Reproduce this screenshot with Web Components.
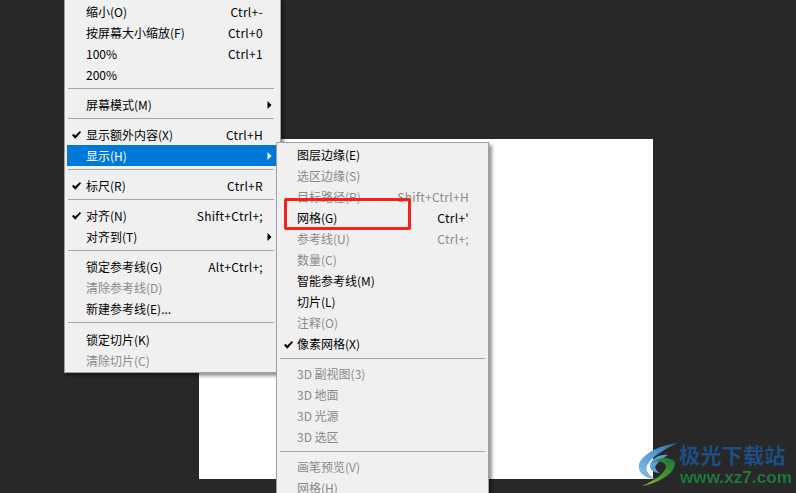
<!DOCTYPE html>
<html>
<head>
<meta charset="utf-8">
<title>menu</title>
<style>
html, body { margin: 0; height: 100%; }
body { background: #282828; overflow: hidden; font-family: "Noto Sans CJK SC", "Noto Sans", sans-serif; }
</style>
</head>
<body>
<ps-stage>
  <ps-menu style="left:64px;top:-2px;width:217px;--left:19px;--right:15px;--sep-right:4px">
    <ps-item label="缩小(O)" key="Ctrl+-"></ps-item>
    <ps-item label="按屏幕大小缩放(F)" key="Ctrl+0"></ps-item>
    <ps-item label="100%" key="Ctrl+1"></ps-item>
    <ps-item label="200%"></ps-item>
    <ps-sep></ps-sep>
    <ps-item label="屏幕模式(M)" arrow></ps-item>
    <ps-sep></ps-sep>
    <ps-item label="显示额外内容(X)" key="Ctrl+H" checked></ps-item>
    <ps-item label="显示(H)" arrow active></ps-item>
    <ps-sep></ps-sep>
    <ps-item label="标尺(R)" key="Ctrl+R" checked></ps-item>
    <ps-sep></ps-sep>
    <ps-item label="对齐(N)" key="Shift+Ctrl+;" checked></ps-item>
    <ps-item label="对齐到(T)" arrow></ps-item>
    <ps-sep></ps-sep>
    <ps-item label="锁定参考线(G)" key="Alt+Ctrl+;"></ps-item>
    <ps-item label="清除参考线(D)" disabled></ps-item>
    <ps-item label="新建参考线(E)..."></ps-item>
    <ps-sep></ps-sep>
    <ps-item label="锁定切片(K)"></ps-item>
    <ps-item label="清除切片(C)" disabled></ps-item>
  </ps-menu>
  <ps-menu style="left:276px;top:142px;width:213px;--right:17px;--lift:2px">
    <ps-item label="图层边缘(E)"></ps-item>
    <ps-item label="选区边缘(S)" disabled></ps-item>
    <ps-item label="目标路径(P)" key="Shift+Ctrl+H" disabled></ps-item>
    <ps-item label="网格(G)" key="Ctrl+'"></ps-item>
    <ps-item label="参考线(U)" key="Ctrl+;" disabled></ps-item>
    <ps-item label="数量(C)" disabled></ps-item>
    <ps-item label="智能参考线(M)"></ps-item>
    <ps-item label="切片(L)"></ps-item>
    <ps-item label="注释(O)" disabled></ps-item>
    <ps-item label="像素网格(X)" checked></ps-item>
    <ps-sep></ps-sep>
    <ps-item label="3D 副视图(3)" disabled></ps-item>
    <ps-item label="3D 地面" disabled></ps-item>
    <ps-item label="3D 光源" disabled></ps-item>
    <ps-item label="3D 选区" disabled></ps-item>
    <ps-sep></ps-sep>
    <ps-item label="画笔预览(V)" disabled></ps-item>
    <ps-item label="网格(H)" disabled></ps-item>
  </ps-menu>
  <ps-mark></ps-mark>
  <ps-logo></ps-logo>
</ps-stage>
<script>
class stage extends HTMLElement {
    constructor() {
        super()
        this.attachShadow({ mode: 'open' });
        this.shadowRoot.innerHTML = `
            <style>
                :host { display: block; position: relative; width: 796px; height: 493px; overflow: hidden; background: #282828; }
                .canvas { position: absolute; left: 199px; top: 139px; width: 454px; height: 340px; background: #fff; }
            </style>
            <div class="canvas"></div>
            <slot></slot>
        `;
    }
}
class menu extends HTMLElement {
    constructor() {
        super()
        this.attachShadow({ mode: 'open' });
        this.shadowRoot.innerHTML = `
            <style>
                :host {
                    display: flex;
                    flex-direction: column;
                    position: absolute;
                    box-sizing: border-box;
                    padding: 2px 2px 1px 2px;
                    background: #f0f0f0;
                    border: 1px solid #a0a0a0;
                    box-shadow: 3px 3px 3px rgba(0, 0, 0, 0.4);
                }
            </style>
            <slot></slot>
        `;
    }
}
class item extends HTMLElement {
    constructor() {
        super()
        this.attachShadow({ mode: 'open' });
    }
    connectedCallback() {
        const key = this.getAttribute('key');
        const check = this.hasAttribute('checked')
            ? '<svg class="check" width="11" height="10" viewBox="0 0 11 10"><path d="M1 5.2 L2.6 3.8 L4.2 5.6 L9 1 L10 2.2 L4.3 8.8 Z" fill="currentColor"/></svg>'
            : '';
        const arrow = this.hasAttribute('arrow')
            ? '<svg class="arrow" width="5" height="8" viewBox="0 0 5 8"><path d="M0.5 0 L4.5 4 L0.5 8 Z" fill="currentColor"/></svg>'
            : '';
        this.shadowRoot.innerHTML = `
            <style>
                :host {
                    display: grid;
                    grid-template-columns: var(--left, 18px) 1fr auto var(--right, 16px);
                    align-items: center;
                    height: 21px;
                    flex: none;
                    font-size: 12px;
                    color: #000;
                    white-space: nowrap;
                }
                :host([disabled]) { color: #8a8a8a; }
                :host([active]) { background: #0078d7; color: #fff; }
                .label, .key { line-height: 19px; margin-bottom: var(--lift, 0px); }
                .key { letter-spacing: 0.3px; }
                .icon { display: flex; justify-content: center; }
                .arrow { justify-self: start; margin-left: 4px; }
            </style>
            <span class="icon">${check}</span>
            <span class="label">${this.getAttribute('label')}</span>
            <span class="key">${key != null ? key : ''}</span>
            ${arrow || '<span></span>'}
        `;
    }
}
class sep extends HTMLElement {
    constructor() {
        super()
        this.attachShadow({ mode: 'open' });
        this.shadowRoot.innerHTML = `
            <style>
                :host { display: block; flex: none; height: 9.1px; padding-top: 3px; box-sizing: border-box; }
                div { height: 1px; background: #a6a6a6; margin: 0 var(--sep-right, 1px) 0 1px; }
            </style>
            <div></div>
        `;
    }
}
class mark extends HTMLElement {
    constructor() {
        super()
        this.attachShadow({ mode: 'open' });
        this.shadowRoot.innerHTML = `
            <style>
                :host {
                    display: block;
                    position: absolute;
                    left: 284px;
                    top: 198px;
                    width: 127px;
                    height: 32px;
                    box-sizing: border-box;
                    border: 3px solid #f3231c;
                    border-radius: 2px;
                }
            </style>
        `;
    }
}
class logo extends HTMLElement {
    constructor() {
        super()
        this.attachShadow({ mode: 'open' });
        this.shadowRoot.innerHTML = `
            <style>
                :host { display: flex; position: absolute; left: 638px; top: 442px; align-items: flex-start; filter: blur(0.3px); }
                svg { flex: none; margin-right: -1px; }
                .words { display: flex; flex-direction: column; }
                .name { font: bold 21px/25px "Noto Sans CJK SC", sans-serif; color: #1c4f86; letter-spacing: 0.3px; white-space: nowrap; }
                .url { font: bold 17px/20px "Liberation Sans", sans-serif; color: #1b7a3c; letter-spacing: 0.1px; white-space: nowrap; margin-top: 1px; margin-left: 1px; }
            </style>
            <svg width="42" height="46" viewBox="0 0 42 46">
                <defs>
                    <linearGradient id="blue" x1="1" y1="0" x2="0" y2="1">
                        <stop offset="0" stop-color="#3d5f78"/>
                        <stop offset="0.45" stop-color="#4f9ad8"/>
                        <stop offset="1" stop-color="#8dbfe6"/>
                    </linearGradient>
                    <linearGradient id="green" x1="0.8" y1="0" x2="0" y2="1">
                        <stop offset="0" stop-color="#1f7a3a"/>
                        <stop offset="0.6" stop-color="#4f9d2e"/>
                        <stop offset="1" stop-color="#c8cf2a"/>
                    </linearGradient>
                </defs>
                <path d="M40 1 C24 3 6 10 1 22 C-1 31 8 37 17 37 C10 33 6 27 10 22 C14 15 26 7 40 1 Z" fill="url(#blue)"/>
                <path d="M30 13 C22 12 12 17 12 24 C12 28 16 31 22 31 C17 28 16 25 19 22 C21 19 25 16 30 13 Z" fill="#5a9fd6"/>
                <path d="M14 21 C20 15 32 14 37 20 C38 30 24 40 4 44 C20 37 27 30 28 25 C28 20 20 18 14 21 Z" fill="url(#green)"/>
            </svg>
            <div class="words">
                <div class="name">极光下载站</div>
                <div class="url">www.xz7.com</div>
            </div>
        `;
    }
}
customElements.define('ps-stage', stage)
customElements.define('ps-menu', menu)
customElements.define('ps-item', item)
customElements.define('ps-sep', sep)
customElements.define('ps-mark', mark)
customElements.define('ps-logo', logo)
</script>
</body>
</html>
